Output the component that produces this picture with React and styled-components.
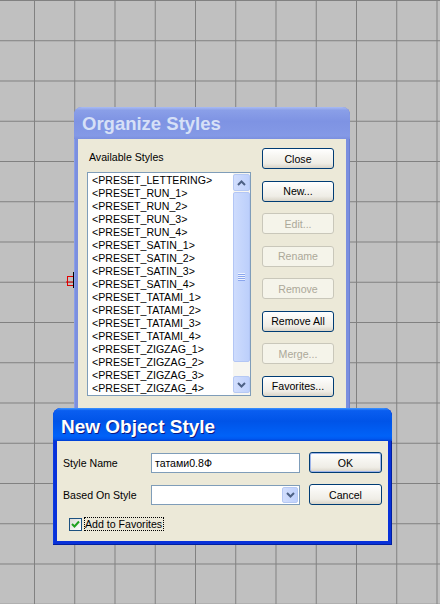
import React from "react";
import styled, { createGlobalStyle, css } from "styled-components";

const GlobalStyle = createGlobalStyle`
	html, body {
		margin: 0;
		padding: 0;
	}
	body {
		width: 440px;
		height: 604px;
		overflow: hidden;
		background-color: #c0c0c0;
		background-image: linear-gradient(to right, #808080 1px, transparent 1px),
			linear-gradient(to bottom, #808080 1px, transparent 1px);
		background-size: 40.25px 40.25px;
		background-position: 34px 0;
		font-family: "Liberation Sans", Arial, sans-serif;
	}
`;

const Desktop = styled.div`
	position: relative;
	width: 440px;
	height: 604px;
`;

const Marker = styled.svg`
	position: absolute;
	left: 65px;
	top: 270px;
`;

const Window = styled.div`
	position: absolute;
	left: ${(p) => p.$left}px;
	top: ${(p) => p.$top}px;
	width: ${(p) => p.$width}px;
	height: ${(p) => p.$height}px;
	box-sizing: border-box;
	display: flex;
	flex-direction: column;
	padding: 0 4px 4px;
	border-radius: 8px 8px 0 0;
	overflow: hidden;
	${(p) =>
		p.$active
			? css`
					background: #0831d9;
					box-shadow: inset -1px -1px 0 #001ea0, inset 1px 0 0 #0a3ae0;
			  `
			: css`
					background: #7b8fdf;
					box-shadow: inset -1px -1px 0 #6a7ecf, inset 1px 0 0 #8a9ee8;
			  `}
`;

const TitleBar = styled.div`
	height: ${(p) => p.$height}px;
	margin: 0 -4px;
	padding: ${(p) => p.$pad}px 0 0 8px;
	box-sizing: border-box;
	display: flex;
	align-items: center;
	font-family: "Liberation Sans", Arial, sans-serif;
	font-weight: bold;
	font-size: ${(p) => p.$size}px;
	${(p) =>
		p.$active
			? css`
					color: #ffffff;
					text-shadow: 1px 1px 0 #0a1883;
					background: linear-gradient(
						to bottom,
						#3d95ff 0%,
						#0a5ef0 8%,
						#0054e8 40%,
						#0062f8 85%,
						#0058f0 94%,
						#003dd0 100%
					);
			  `
			: css`
					color: #d6e0f7;
					background: linear-gradient(
						to bottom,
						#a9bbf2 0%,
						#8a9fe8 10%,
						#7e93e3 45%,
						#8499e6 90%,
						#7b8fdf 100%
					);
			  `}
`;

const Body = styled.div`
	flex: 1;
	background: #ece9d8;
	font-size: 10.6px;
	color: #000;
`;

const OrganizeBody = styled(Body)`
	display: flex;
	gap: 11px;
	padding: 9px 12px 0 9px;
`;

const LeftColumn = styled.div`
	display: flex;
	flex-direction: column;
`;

const Label = styled.div`
	height: 18px;
	line-height: 18px;
	margin-bottom: 6px;
	padding-left: 2px;
	white-space: nowrap;
`;

const ListBox = styled.div`
	width: 164px;
	height: 224px;
	box-sizing: border-box;
	border: 1px solid #7f9db9;
	background: #fff;
	display: flex;
`;

const ListItems = styled.div`
	flex: 1;
	padding: 1px 0 0 4px;
	overflow: hidden;
`;

const ListItem = styled.div`
	height: 13px;
	line-height: 13px;
	white-space: nowrap;
`;

const ScrollBar = styled.div`
	width: 17px;
	display: flex;
	flex-direction: column;
	padding: 1px 0 2px;
	box-sizing: border-box;
	background: #f7f6f1;
`;

const ScrollButton = styled.div`
	height: 17px;
	box-sizing: border-box;
	border: 1px solid #b6c9f4;
	border-radius: 2px;
	background: linear-gradient(to right, #d2defd, #bfd1fc);
	display: flex;
	align-items: center;
	justify-content: center;
`;

const Thumb = styled.div`
	height: 170px;
	margin-top: 1px;
	box-sizing: border-box;
	border: 1px solid #b3c6f5;
	border-radius: 2px;
	background: linear-gradient(to right, #cedcfd, #bccffb);
	display: flex;
	align-items: center;
	justify-content: center;
`;

const Grip = styled.div`
	width: 7px;
	height: 8px;
	background: repeating-linear-gradient(
		to bottom,
		#eef3fe 0px,
		#eef3fe 1px,
		#8aa6ee 1px,
		#8aa6ee 2px
	);
`;

const Spacer = styled.div`
	flex: 1;
`;

const ButtonColumn = styled.div`
	display: flex;
	flex-direction: column;
	gap: 11.5px;
`;

const Button = styled.button`
	width: ${(p) => p.$width || 72}px;
	height: 21px;
	padding: 0;
	box-sizing: border-box;
	font-family: "Liberation Sans", Arial, sans-serif;
	font-size: 10.6px;
	border-radius: 3px;
	color: #000;
	border: 1px solid #003c74;
	background: linear-gradient(
		to bottom,
		#ffffff 0%,
		#f7f6f2 35%,
		#efede6 75%,
		#d9d4c8 100%
	);
	${(p) =>
		p.$default &&
		css`
			box-shadow: inset 0 0 0 1px #9fb5ea;
		`}
	&:disabled {
		color: #aca899;
		border-color: #c9c7ba;
		background: #f5f4ea;
	}
`;

const NewBody = styled(Body)`
	padding: 11px 0 0 6px;
`;

const FormGrid = styled.div`
	display: grid;
	grid-template-columns: 79px 149px 73px;
	grid-auto-rows: 21px;
	column-gap: 9px;
	row-gap: 11px;
	align-items: center;
`;

const FieldLabel = styled.div`
	white-space: nowrap;
`;

const TextField = styled.div`
	height: 20px;
	box-sizing: border-box;
	border: 1px solid #7f9db9;
	background: #fff;
	padding-left: 3px;
	display: flex;
	align-items: center;
	justify-content: ${(p) => (p.$combo ? "flex-end" : "flex-start")};
	padding-right: ${(p) => (p.$combo ? 1 : 0)}px;
	font-family: "Liberation Sans", "DejaVu Sans", sans-serif;
`;

const DropButton = styled(ScrollButton)`
	width: 16px;
	height: 16px;
`;

const CheckRow = styled.div`
	display: flex;
	align-items: center;
	gap: 2px;
	margin: 12px 0 0 6px;
`;

const CheckBox = styled.div`
	width: 13px;
	height: 13px;
	box-sizing: border-box;
	border: 1px solid #1c5180;
	background: linear-gradient(135deg, #dcdcd7, #ffffff);
	display: flex;
	align-items: center;
	justify-content: center;
`;

const FocusLabel = styled.span`
	border: 1px dotted #000;
	line-height: 12px;
	padding: 0 1px 0 0;
`;

const Chevron = ({ up }) => (
	<svg width="9" height="6" viewBox="0 0 9 6">
		<path
			d={up ? "M1 5 L4.5 1.5 L8 5" : "M1 1 L4.5 4.5 L8 1"}
			fill="none"
			stroke="#4d6185"
			strokeWidth="2"
		/>
	</svg>
);

const styles = [
	"<PRESET_LETTERING>",
	"<PRESET_RUN_1>",
	"<PRESET_RUN_2>",
	"<PRESET_RUN_3>",
	"<PRESET_RUN_4>",
	"<PRESET_SATIN_1>",
	"<PRESET_SATIN_2>",
	"<PRESET_SATIN_3>",
	"<PRESET_SATIN_4>",
	"<PRESET_TATAMI_1>",
	"<PRESET_TATAMI_2>",
	"<PRESET_TATAMI_3>",
	"<PRESET_TATAMI_4>",
	"<PRESET_ZIGZAG_1>",
	"<PRESET_ZIGZAG_2>",
	"<PRESET_ZIGZAG_3>",
	"<PRESET_ZIGZAG_4>",
];

const buttons = [
	{ label: "Close", on: true },
	{ label: "New...", on: true },
	{ label: "Edit...", on: false },
	{ label: "Rename", on: false },
	{ label: "Remove", on: false },
	{ label: "Remove All", on: true },
	{ label: "Merge...", on: false },
	{ label: "Favorites...", on: true },
];

export default () => {
	return (
		<Desktop>
			<GlobalStyle />
			<Marker width="10" height="20" viewBox="0 0 10 20">
				<rect x="2.5" y="6.5" width="6" height="9" fill="none" stroke="#e00000" />
				<line x1="1" y1="12" x2="8" y2="12" stroke="#e00000" />
				<line x1="8.5" y1="2" x2="8.5" y2="18" stroke="#000" />
			</Marker>

			<Window $left={74} $top={107} $width={276} $height={316}>
				<TitleBar $height={32} $pad={1} $size={18.5}>
					Organize Styles
				</TitleBar>
				<OrganizeBody>
					<LeftColumn>
						<Label>Available Styles</Label>
						<ListBox>
							<ListItems>
								{styles.map((s) => (
									<ListItem key={s}>{s}</ListItem>
								))}
							</ListItems>
							<ScrollBar>
								<ScrollButton>
									<Chevron up />
								</ScrollButton>
								<Thumb>
									<Grip />
								</Thumb>
								<Spacer />
								<ScrollButton>
									<Chevron />
								</ScrollButton>
							</ScrollBar>
						</ListBox>
					</LeftColumn>
					<ButtonColumn>
						{buttons.map((b) => (
							<Button key={b.label} disabled={!b.on}>
								{b.label}
							</Button>
						))}
					</ButtonColumn>
				</OrganizeBody>
			</Window>

			<Window $active $left={53} $top={408} $width={339} $height={137}>
				<TitleBar $active $height={33} $pad={4} $size={19}>
					New Object Style
				</TitleBar>
				<NewBody>
					<FormGrid>
						<FieldLabel>Style Name</FieldLabel>
						<TextField>татами0.8Ф</TextField>
						<Button $width={73} $default>
							OK
						</Button>
						<FieldLabel>Based On Style</FieldLabel>
						<TextField $combo>
							<DropButton>
								<Chevron />
							</DropButton>
						</TextField>
						<Button $width={73}>Cancel</Button>
					</FormGrid>
					<CheckRow>
						<CheckBox>
							<svg width="9" height="9" viewBox="0 0 9 9">
								<path
									d="M1 4 L3.5 6.5 L8 1.5"
									fill="none"
									stroke="#21a121"
									strokeWidth="2"
								/>
							</svg>
						</CheckBox>
						<FocusLabel>Add to Favorites</FocusLabel>
					</CheckRow>
				</NewBody>
			</Window>
		</Desktop>
	);
};
